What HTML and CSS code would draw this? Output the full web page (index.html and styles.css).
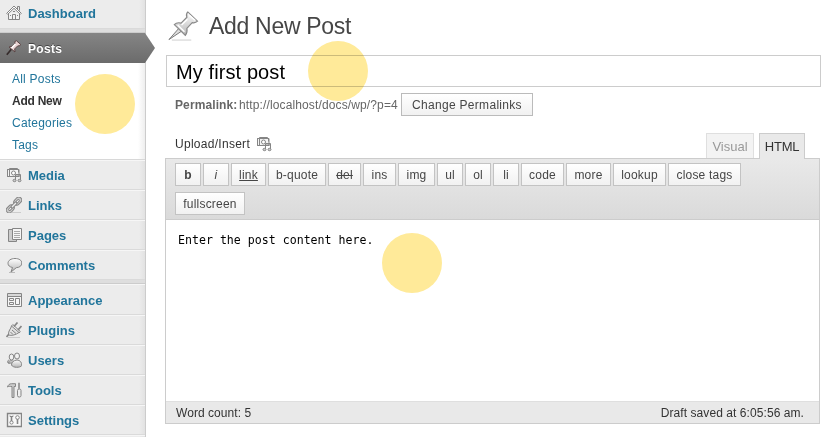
FILE: index.html
```html
<!DOCTYPE html>
<html lang="en">
<head>
<meta charset="utf-8">
<title>Add New Post</title>
<link rel="stylesheet" href="styles.css">
</head>
<body>
<svg class="defs" width="0" height="0">
  <defs>
    <linearGradient id="metal" x1="0" y1="0" x2="0" y2="1"><stop offset="0" stop-color="#fff"/><stop offset="1" stop-color="#b5b5b5"/></linearGradient>
    <symbol id="media" viewBox="0 0 16 16"><path d="M1.500 2.500h2v-1h8v1h1.500v7H1.500z" fill="#f4f4f4"/><path d="M3.500 2.500v7M1.500 2.500h11v3M1.500 2.500v7h7"/><circle cx="7.500" cy="6" r="2" fill="#fff"/><path d="M9.500 13V7.500h5V13M10 9h4" fill="none"/><ellipse cx="8.500" cy="13.500" rx="1.500" ry="1.200" fill="#ccc"/><ellipse cx="13.500" cy="13.500" rx="1.500" ry="1.200" fill="#ccc"/></symbol>
  </defs>
</svg>
<div class="page">
  <nav class="sidebar">
    <a class="item first"><svg class="icon" viewBox="0 0 16 16"><path d="M2.500 8v6.500h11V8" fill="#f2f2f2"/><path d="M.7 8.300 8 1l7.300 7.300-1 1L8 3.300 1.700 9.300z" fill="#fff"/><path d="M11.500 4V1.500h2v4M6.500 14V9.500h3V14M4 10.500h1M11 10.500h1M7 6.500h2"/></svg><span class="dashboard">Dashboard</span></a>
    <div class="separator"></div>
    <a class="item current"><svg class="icon" viewBox="0 0 16 16"><path d="M.8 14.800 5.500 9" stroke="#362c2c" stroke-width="1.700"/><path d="m3 7 3-.7 3-3L8.800 1.500 10.500.8l4 3.500-.8 1.500-2 .1-3 3L9 12z" fill="#e9d3d3" stroke="#5a4343"/><path d="m5.500 8 4-4" stroke="#fff" stroke-width="1.500"/></svg><span>Posts</span></a>
    <div class="submenu"><a>All Posts</a><a class="active">Add New</a><a>Categories</a><a>Tags</a></div>
    <a class="item"><svg class="icon"><use href="#media"/></svg><span>Media</span></a>
    <a class="item"><svg class="icon" viewBox="0 0 16 16"><path d="M6 15.500h9" stroke="#ccc"/><g transform="rotate(-46 8 8)"><rect x="-1.800" y="5" width="8.800" height="6" rx="3" fill="#ccc"/><rect x=".8" y="7" width="4" height="2" rx="1" fill="#fff"/><rect x="9" y="5" width="8.800" height="6" rx="3" fill="#ccc"/><rect x="11.200" y="7" width="4" height="2" rx="1" fill="#fff"/><rect x="4.500" y="6.800" width="7" height="2.400" rx="1" fill="#eee"/></g></svg><span>Links</span></a>
    <a class="item"><svg class="icon" viewBox="0 0 16 16"><path d="M2.500 2.500h8v12h-8z" fill="#ccc"/><path d="M6.500 1.500h9v11h-9z" fill="#f5f5f5"/><path d="M8 4.500h6M8 6.500h6M8 8.500h6M8 10.500h6" stroke="#aaa"/></svg><span>Pages</span></a>
    <a class="item"><svg class="icon" viewBox="0 0 16 16"><path d="M3 15.500h6" stroke="#bbb"/><path d="M9 1.500c4 0 6.800 1.800 6.800 4.500s-2 4.500-5.500 4.700L5 15l1.500-4.500C3.700 10 2 8.500 2 6.300 2 3.400 5 1.500 9 1.500z" fill="url(#metal)"/></svg><span>Comments</span></a>
    <div class="separator"></div>
    <a class="item"><svg class="icon" viewBox="0 0 16 16"><path d="M1.500 1.500h14v13h-14z" fill="#f5f5f5"/><path d="M2 4.500h13M3.500 6.500h4v2h-4zM3.500 10.500h4v2h-4zM9.500 6.500h4v6h-4z"/><path d="M2 3h13" stroke="#bbb"/></svg><span>Appearance</span></a>
    <a class="item"><svg class="icon" viewBox="0 0 16 16"><path d="M2 15.500h12" stroke="#ccc"/><path d="M.5 15 3 12M8 4.500l3.500-4M12 8l3.500-4" stroke-width="1.700"/><path d="M5.500 4C5 7 2 8.500 2.500 13c3 1 7 0 10.500-2.500z" fill="#e2e2e2"/><path d="m5.500 4 1.300-1.500 7.500 7-1.300 1.500M6 8l4 3.500M4.500 10l2.500 2.500"/></svg><span>Plugins</span></a>
    <a class="item"><svg class="icon" viewBox="0 0 16 16"><path d="M2 11c0-3 6-3 7 0z" fill="#ddd"/><ellipse cx="5.500" cy="5" rx="2.300" ry="3" fill="#f1f1f1"/><ellipse cx="11" cy="4" rx="2.500" ry="3" fill="#f1f1f1"/><path d="M5.500 13c0-3 2-4.500 5.500-5 3 0 5 2.500 4.800 5.500-1.500 2.500-9 2.500-10.300-.5z" fill="url(#metal)"/><path d="M3 7.800c-2.300 1.500-1.800 3.500 1.200 3.400"/></svg><span>Users</span></a>
    <a class="item"><svg class="icon" viewBox="0 0 16 16"><path d="M1.500 5c.5-2 2-3.300 4-3.300h4v2.800H8v11H6v-11C4 4.500 3 4 1.500 5z" fill="#ccc"/><path d="M13 .8v6" stroke-width="1.500"/><rect x="11.500" y="7" width="3.500" height="8" rx="1.500" fill="#eee"/></svg><span>Tools</span></a>
    <a class="item"><svg class="icon" viewBox="0 0 16 16"><path d="M1.500 1.500h14v13h-14z" fill="#f8f8f8" stroke-width="1.400"/><path d="M5.500 4v6M11.500 7v5" stroke-width="1.600"/><circle cx="5.500" cy="10.500" r="1.600" fill="#fff"/><circle cx="11.500" cy="5.500" r="1.800" fill="#fff"/><path d="M4 3.500v1h3v-1"/></svg><span>Settings</span></a>
    <a class="item"></a>
  </nav>
  <main class="content">
    <header class="heading">
      <svg class="pin" viewBox="0 0 32 32"><path d="M4 30.500h20" stroke="#ccc"/><path d="m1 30 10.500-12 3 3z" fill="#ddd" stroke="#777"/><path d="M6.500 14.500c2-2 5-2 7-1.500l6-6c-.8-2-.5-4 1-5.500L30.500 11c-1.500 1.500-3.500 2-5.500 1.500l-5.500 6c.6 3 .2 5-1.600 7.200z" fill="url(#metal)" stroke="#888" stroke-width="1.200"/><path d="m14 15 6-6M22 5l6 5M10 15l7 7" stroke="#fff" stroke-width="1.500"/></svg>
      <h1>Add New Post</h1>
    </header>
    <div class="title-input"><span>My first post</span></div>
    <div class="permalink"><b>Permalink:</b><span class="url">http://localhost/docs/wp/?p=4</span><button class="change">Change Permalinks</button></div>
    <div class="editor-tabs">
      <div class="upload">Upload/Insert <svg class="icon"><use href="#media"/></svg></div>
      <div class="tab visual">Visual</div><div class="tab html">HTML</div>
    </div>
    <section class="editor">
      <div class="toolbar">
        <button class="w26 bold">b</button><button class="w26 italic">i</button><button class="w35 underline">link</button><button class="w58">b-quote</button><button class="w33 strike">del</button><button class="w33">ins</button><button class="w37">img</button><button class="w26">ul</button><button class="w26">ol</button><button class="w26">li</button><button class="w43">code</button><button class="w45">more</button><button class="w53">lookup</button><button class="w73">close tags</button><button class="w70">fullscreen</button>
      </div>
      <div class="body">Enter the post content here.</div>
      <footer class="status"><span class="count">Word count: 5</span><span class="saved">Draft saved at 6:05:56 am.</span></footer>
    </section>
  </main>
  <i class="spot spot-menu"></i><i class="spot spot-title"></i><i class="spot spot-body"></i>
</div>
</body>
</html>
```
FILE: styles.css
```css
* { box-sizing: border-box; }
body { margin: 0; background: #fff; color: #333; font: 12px "Liberation Sans", Arial, sans-serif; }
.defs { position: absolute; }
.page { position: relative; display: flex; width: 831px; height: 437px; overflow: hidden; }
.sidebar { width: 146px; flex: none; border-right: 1px solid #ccc; background: linear-gradient(90deg, #ececec 139px, #e2e2e2); }
.item { display: flex; align-items: center; height: 30px; padding: 2px 0 0 6px; gap: 6px; border-top: 1px solid #f6f6f6; border-bottom: 1px solid #dadada; color: #21759b; font-size: 13px; font-weight: bold; line-height: 18px; }
.item .icon { margin-top: -2px; }
.item.first { height: 29px; padding-top: 0; border-top: 0; }
.item.first .icon { margin-top: -2px; }
.icon { width: 16px; height: 16px; flex: none; fill: none; stroke: #858585; stroke-width: 1; }
.separator { height: 4px; background: #dedede; border-bottom: 1px solid #ccc; }
.separator + .item { height: 31px; }
.separator + .current { position: relative; height: 30px; padding-top: 1px; border: 0; color: #fff; background: linear-gradient(#858585, #6b6b6b); text-shadow: 0 -1px 0 #444; font-size: 12px; letter-spacing: .3px; }
.current::after { content: ""; position: absolute; left: 145px; top: 0; width: 10px; height: 30px; background: linear-gradient(#858585, #6b6b6b); clip-path: polygon(0 0, 100% 50%, 0 100%); }
.submenu { display: flex; flex-direction: column; height: 97px; padding: 5px 0 0 12px; border-bottom: 1px solid #d8d8d8; background: linear-gradient(90deg, #fff 138px, #eee); }
.submenu a { height: 22px; line-height: 22px; color: #21759b; letter-spacing: .22px; }
.submenu .active { color: #333; font-weight: bold; letter-spacing: -.25px; }
.content { width: 656px; margin-left: 19px; }
.heading { display: flex; align-items: center; height: 55px; padding: 0 0 3px 3px; gap: 10px; }
.pin { width: 31px; height: 32px; fill: none; }
h1 { margin: 0; color: #464646; font-size: 23px; font-weight: normal; line-height: 30px; letter-spacing: -.3px; }
.title-input { height: 32px; margin-left: 1px; padding-left: 9px; border: 1px solid #ccc; color: #000; font-size: 20px; line-height: 32px; letter-spacing: .1px; }
.permalink { display: flex; align-items: center; height: 35px; padding-left: 10px; color: #666; }
.permalink b { width: 64px; letter-spacing: .1px; }
.url { width: 162px; letter-spacing: .13px; }
button { height: 23px; padding: 0; border: 1px solid #bbb; background: linear-gradient(#fff, #f1f1f1); color: #464646; font: 12px "Liberation Sans", Arial, sans-serif; letter-spacing: .2px; text-align: center; white-space: nowrap; }
.change { width: 132px; letter-spacing: .3px; }
.editor-tabs { display: flex; align-items: flex-end; height: 36px; padding-right: 16px; }
.upload { display: flex; align-items: center; gap: 6px; height: 29px; margin: 0 auto 0 0; padding-left: 10px; align-self: flex-end; line-height: 22px; letter-spacing: .28px; }
.upload .icon { margin-top: 0; }
.tab { height: 25px; border: 1px solid #ccc; border-bottom: 0; text-align: center; font-size: 13px; line-height: 26px; }
.visual { width: 48px; margin-right: 5px; border-color: #dfdfdf; background: #f3f3f3; color: #999; }
.html { position: relative; width: 46px; height: 26px; margin-bottom: -1px; background: #e9e9e9; letter-spacing: -.2px; }
.editor { width: 655px; height: 266px; border: 1px solid #ccc; }
.toolbar { display: flex; flex-wrap: wrap; align-content: flex-start; gap: 6px 2px; height: 61px; padding: 4px 60px 0 9px; border-bottom: 1px solid #ccc; background: linear-gradient(#e9e9e9, #dadada); }
.toolbar button { border-color: #c3c3c3; }
.w26 { width: 26px; } .w33 { width: 33px; } .w35 { width: 35px; } .w37 { width: 37px; } .w43 { width: 43px; } .w45 { width: 45px; } .w53 { width: 53px; } .w58 { width: 58px; } .w70 { width: 70px; } .w73 { width: 73px; }
.bold { font-weight: bold; } .italic { font-style: italic; } .underline { text-decoration: underline; } .strike { text-decoration: line-through; }
.body { height: 181px; padding: 12px; color: #000; font: 11.6px/17px "DejaVu Sans Mono", monospace; }
.status { display: flex; justify-content: space-between; height: 22px; padding: 0 15px 0 10px; border-top: 1px solid #dfdfdf; background: #e9e9e9; line-height: 22px; }
.count { letter-spacing: .05px; }
.saved { letter-spacing: .07px; }
.spot { position: absolute; width: 60px; height: 60px; border-radius: 50%; background: #ffea99; mix-blend-mode: multiply; }
.spot-menu { left: 74.5px; top: 73.5px; }
.spot-title { left: 307.500px; top: 40.500px; }
.spot-body { left: 381.500px; top: 232.500px; }
```
